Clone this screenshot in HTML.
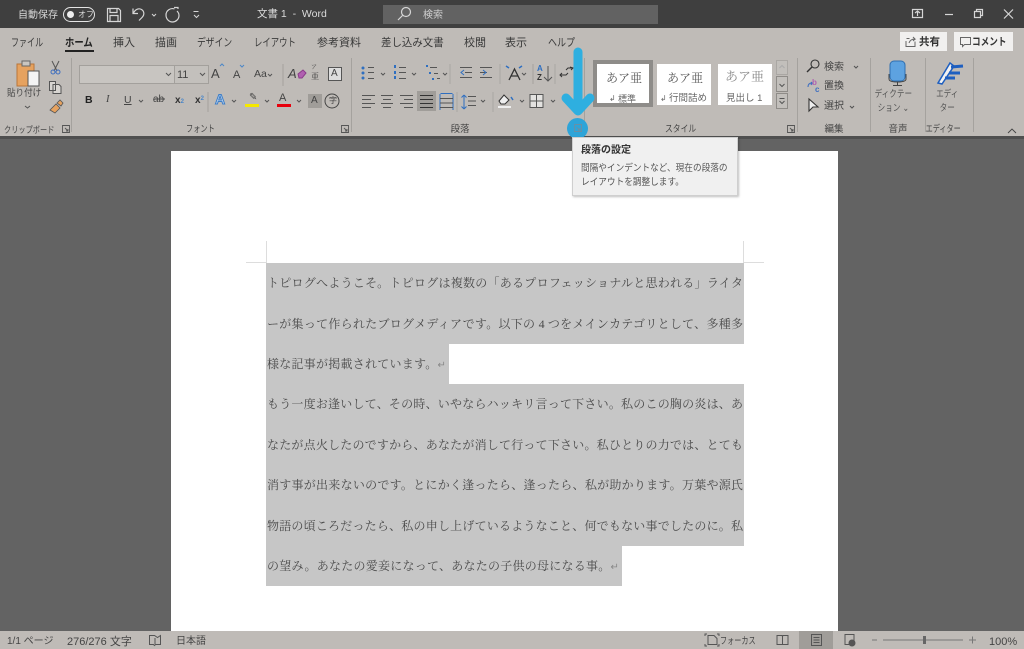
<!DOCTYPE html>
<html lang="ja"><head><meta charset="utf-8"><title>Word</title>
<style>
html,body{margin:0;padding:0;background:#636363}
#r{position:relative;width:1024px;height:649px;overflow:hidden;background:#636363;font-family:"Liberation Sans","Noto Sans CJK JP",sans-serif;color:#3c3c3c}
.a{position:absolute}
.t{position:absolute;white-space:nowrap;font-size:10px;line-height:14px;color:#444;transform-origin:left center}
.c{transform:translateX(-50%);text-align:center}
.d{position:absolute;width:1px;top:58px;height:74px;background:#a5a29e}
.l{position:absolute;left:267px;width:476px;height:20px;line-height:20px;font-family:"Liberation Serif","Noto Serif CJK JP",serif;font-size:12px;color:#4a4a4a;text-align:justify;text-align-last:justify;white-space:nowrap}
.tab{position:absolute;top:36px;font-size:11px;line-height:14px;color:#3a3a3a;white-space:nowrap;transform-origin:left center}
svg{position:absolute;overflow:visible}
.s{font-family:"Liberation Serif","Noto Serif CJK JP",serif}
</style></head><body><div id="r">

<!-- title bar -->
<div class="a" style="left:0;top:0;width:1024px;height:28px;background:#3f3f3f"></div>
<div class="t" style="left:18px;top:9px;color:#d8d8d8">自動保存</div>
<div class="a" style="left:63px;top:7px;width:30px;height:13px;border:1px solid #e4e4e4;border-radius:8px"></div>
<div class="a" style="left:67px;top:11px;width:7px;height:7px;background:#eee;border-radius:50%"></div>
<div class="t" style="left:78px;top:8px;font-size:8px;color:#ddd">オフ</div>
<div class="a" style="left:383px;top:5px;width:275px;height:19px;background:#626262"></div>
<svg style="left:0;top:0" width="1024" height="28" fill="none" stroke="#d6d6d6" stroke-width="1.2">
<path d="M107.500 8.500h11l2 2v11h-13zM110 8.500v4h7v-4M110 21.500v-6h8v6"/>
<path d="M133 8.500v5h5M133.500 13c2-4 5.500-5 8-3.500s3.500 5 .5 8l-3 3"/>
<path d="M152 14l2 2 2-2" stroke-width="1"/>
<path d="M178 9v-1.500h-4M174.500 9c-4-1.500-8.500 1.500-8.500 6s3.500 7 6.500 7 6.500-2.500 6.500-6.500c0-2-1-3.500-2-4.500"/>
<path d="M193.500 11.500h5M194 15l2.500 2.500 2.500-2.500" stroke-width="1"/>
<circle cx="406" cy="12" r="4.500"/><path d="M402.500 15.500l-4.500 4.500"/>
<path d="M912.500 9.500h10v8h-10zM915 13l2.500-2 2.500 2M917.500 11v5"/>
<path d="M945 14.500h8"/>
<path d="M974.500 11.500h6v6h-6zM976.500 11.500v-2h6v6h-2"/>
<path d="M1004 9.500l9 9M1013 9.500l-9 9"/>
</svg>
<div class="t" style="left:257px;top:7px;font-size:10.500px;color:#dcdcdc">文書 1&nbsp; -&nbsp; Word</div>
<div class="t" style="left:423px;top:9px;color:#cfcfcf">検索</div>

<!-- ribbon -->
<div class="a" style="left:0;top:28px;width:1024px;height:108px;background:#bfbbb7"></div>
<div class="a" style="left:0;top:136px;width:1024px;height:3px;background:#4f4f4f"></div>
<div class="tab" style="left:11px;transform:scaleX(.73)">ファイル</div>
<div class="tab" style="left:65px;font-weight:bold;color:#222;transform:scaleX(.85)">ホーム</div>
<div class="a" style="left:65px;top:50px;width:29px;height:2px;background:#222"></div>
<div class="tab" style="left:113px">挿入</div>
<div class="tab" style="left:155px">描画</div>
<div class="tab" style="left:197px;transform:scaleX(.8)">デザイン</div>
<div class="tab" style="left:254px;transform:scaleX(.76)">レイアウト</div>
<div class="tab" style="left:317px">参考資料</div>
<div class="tab" style="left:381px;transform:scaleX(.95)">差し込み文書</div>
<div class="tab" style="left:464px">校閲</div>
<div class="tab" style="left:505px">表示</div>
<div class="tab" style="left:548px;transform:scaleX(.82)">ヘルプ</div>

<div class="a" style="left:900px;top:32px;width:47px;height:19px;background:#f1f0ef"></div>
<div class="t" style="left:919px;top:35px;font-size:10.500px;font-weight:bold;color:#333">共有</div>
<div class="a" style="left:954px;top:32px;width:59px;height:19px;background:#f1f0ef"></div>
<div class="t" style="left:972px;top:35px;font-size:10.500px;font-weight:bold;color:#333;transform:scaleX(.82)">コメント</div>
<svg style="left:0;top:0" width="1024" height="56" fill="none" stroke="#666" stroke-width="1">
<path d="M906.500 38.500h3M906 41v5.500h9v-5M909 43c1-3 3-4 6-4l-2-2M915 39l-2 2"/>
<path d="M960.500 37.500h10v7h-6l-2 2v-2h-2z"/>
</svg>

<div class="d" style="left:71px"></div><div class="d" style="left:351px"></div><div class="d" style="left:584px"></div>
<div class="d" style="left:797px"></div><div class="d" style="left:870px"></div><div class="d" style="left:925px"></div><div class="d" style="left:973px"></div>

<!-- clipboard -->
<svg style="left:0;top:56px" width="72" height="60" fill="none">
<rect x="17" y="8" width="17" height="22" fill="#e6a25f" stroke="#b9763a"/>
<rect x="22" y="5" width="8" height="5" fill="#c9c5c0" stroke="#666"/>
<rect x="28" y="15" width="11" height="15" fill="#f4f4f4" stroke="#555"/>
<path d="M52 5l5 10M59 5l-5 10" stroke="#555"/><circle cx="53" cy="16" r="2" stroke="#3f6fc0"/><circle cx="58" cy="16" r="2" stroke="#3f6fc0"/>
<path d="M49.500 25.500h6v9h-6zM53 28.500h6l2 2v7h-8z" stroke="#555" fill="#d8d5d1"/>
<path d="M50 54l6-6 4 4-5 5zM57 47l3-3 3 3-2 3z" fill="#e6a25f" stroke="#555" stroke-width=".8"/>
<path d="M25 50l2.500 2 2.500-2" stroke="#555"/>
</svg>
<div class="t c" style="left:26px;top:87px;font-size:9.500px;transform:translateX(-50%) scaleX(.9)">貼り付け</div>
<div class="t" style="left:4px;top:123px;font-size:9px;transform:scaleX(.8)">クリップボード</div>

<!-- font boxes -->
<div class="a" style="left:79px;top:65px;width:94px;height:17px;background:#c8c5c1;border:1px solid #a3a09c"></div>
<div class="a" style="left:174px;top:65px;width:33px;height:17px;background:#c3c0bc;border:1px solid #a3a09c"></div>
<div class="t" style="left:177px;top:68px;font-size:11px">11</div>
<div class="t" style="left:211px;top:67px;font-size:13px">A</div>
<div class="t" style="left:233px;top:68px;font-size:11px">A</div>
<div class="t" style="left:254px;top:67px;font-size:10.500px">Aa</div>
<div class="t" style="left:288px;top:67px;font-size:13px;font-style:italic">A</div>
<div class="t s" style="left:311px;top:64px;font-size:6px;line-height:8px">ア</div>
<div class="t s" style="left:311px;top:72px;font-size:8px;line-height:10px">亜</div>
<div class="a" style="left:328px;top:67px;width:12px;height:12px;border:1px solid #555;background:#ddd"></div>
<div class="t" style="left:331px;top:67px;font-size:10px">A</div>
<svg style="left:0;top:56px" width="350" height="60" fill="none" stroke="#555" stroke-width="1">
<path d="M166 17l2.500 2.500 2.500-2.500M200 17l2.500 2.500 2.500-2.500M268 18l2 2 2-2M139 44l2 2 2-2M232 44l2 2 2-2M265 44l2 2 2-2M297 44l2 2 2-2"/>
<path d="M220 10l2-2 2 2M240 9l2 2 2-2" stroke="#4a86c8"/>
<path d="M283 8v22" stroke="#a5a29e"/><path d="M298 18l5-4 3 3-4 5h-3z" fill="#b060b0" stroke="#8a3a8a"/>
<path d="M208 36v20" stroke="#a5a29e"/>
<path d="M153 43h12" stroke="#444"/><path d="M332 45m-7 0a7 7 0 1 0 14 0a7 7 0 1 0 -14 0" stroke="#444"/>
</svg>
<div class="t" style="left:85px;top:93px;font-size:10.500px;font-weight:bold;color:#222">B</div>
<div class="t" style="left:106px;top:93px;font-size:10.500px;font-style:italic;font-family:'Liberation Serif',serif">I</div>
<div class="t" style="left:124px;top:93px;font-size:10.500px;text-decoration:underline">U</div>
<div class="t" style="left:153px;top:93px;font-size:10px">ab</div>
<div class="t" style="left:175px;top:94px;font-size:10px;font-weight:bold;color:#333">x<span style="font-size:6px;color:#4a86c8">2</span></div>
<div class="t" style="left:195px;top:92px;font-size:10px;font-weight:bold;color:#333">x<span style="font-size:6px;color:#4a86c8;vertical-align:3px">2</span></div>
<div class="t" style="left:215px;top:92px;font-size:14px;font-weight:bold;color:#bcd3ec;-webkit-text-stroke:1px #3f7fc8">A</div>
<div class="t" style="left:249px;top:91px;font-size:10px">✎</div>
<div class="a" style="left:245px;top:104px;width:14px;height:3px;background:#f5e800"></div>
<div class="t" style="left:279px;top:91px;font-size:11px">A</div>
<div class="a" style="left:277px;top:104px;width:14px;height:3px;background:#e8000c"></div>
<div class="a" style="left:308px;top:94px;width:14px;height:14px;background:#a09d99"></div>
<div class="t" style="left:311px;top:94px;font-size:10px">A</div>
<div class="t" style="left:329px;top:94px;font-size:8px">字</div>
<div class="t c" style="left:205px;top:123px;font-size:9.500px;transform:translateX(-50%) scaleX(.76)">フォント</div>

<!-- launchers -->
<svg style="left:0;top:120px" width="1024" height="16" fill="none" stroke="#555" stroke-width=".9">
<path d="M62.500 5.500h7v7h-7zM65 8l3 3M68 9v2h-2"/>
<path d="M341.500 5.500h7v7h-7zM344 8l3 3M347 9v2h-2"/>
<path d="M787.500 5.500h7v7h-7zM790 8l3 3M793 9v2h-2"/>
<path d="M1008 13l4-4 4 4" stroke="#444"/>
</svg>

<!-- paragraph -->
<svg style="left:350px;top:56px" width="240" height="60" fill="none" stroke="#555" stroke-width="1">
<g fill="#2f6fc0" stroke="none"><circle cx="13" cy="12" r="1.500"/><circle cx="13" cy="17" r="1.500"/><circle cx="13" cy="22" r="1.500"/><rect x="44" y="9" width="2" height="3"/><rect x="44" y="15" width="2" height="3"/><rect x="44" y="20" width="2" height="3"/><rect x="76" y="9" width="2" height="2"/><rect x="79" y="16" width="2" height="2"/><rect x="82" y="22" width="2" height="2"/></g>
<path d="M18 11.500h6M18 16.500h6M18 22.500h6M49 11.500h7M49 16.500h7M49 22.500h7M80 11.500h7M84 17.500h4M87 22.500h3"/>
<path d="M31 17l2 2 2-2M62 17l2 2 2-2M93 17l2 2 2-2M172 17l2 2 2-2"/>
<path d="M110 11.500h12M115 16.500h7M110 21.500h12M130 11.500h12M130 16.500h7M130 21.500h12"/>
<path d="M114 14l-3 2.500 3 2.500M133 14l3 2.500-3 2.500" stroke="#2f6fc0"/>
<path d="M159 24l5.500-11 5.500 11M161 20h7" stroke="#333" stroke-width="1.300"/>
<path d="M156 10l3 2M172 10l-3 2" stroke="#2f6fc0" stroke-width="1.500"/>
<path d="M183 8v20" stroke="#a5a29e"/><path d="M107 36v20M143 36v20M100 8v20M150 8v20M205 8v20" stroke="#a5a29e" opacity=".8"/>
<path d="M198 10v15M194 21l4 4 4-4"/>
<path d="M210 19h6l2-2M223 12h-5l-2 2M212 17l-2 2 2 2M220 11l3 1-2 2" stroke="#333"/>
<path d="M12 39.500h13M12 43.500h9M12 47.500h13M12 51.500h9M31 39.500h12M33 43.500h8M31 47.500h12M33 51.500h8M50 39.500h13M54 43.500h9M50 47.500h13M54 51.500h9"/>
<rect x="67" y="35" width="19" height="20" fill="#a09d99" stroke="none"/>
<path d="M70 39.500h13M70 43.500h13M70 47.500h13M70 51.500h13" stroke="#333"/>
<path d="M90 38v16M103 38v16M90.500 37.500h12" stroke="#2f6fc0"/><path d="M90 42.500h13M90 47h13M90 51.500h13" stroke="#555"/>
<path d="M114 39l-2.500 2.500M114 39l2.500 2.500M114 39v14M114 53l-2.500-2.500M114 53l2.500-2.500" stroke="#2f6fc0"/>
<path d="M118 40.500h8M118 45h8M118 49.500h8"/>
<path d="M131 44l2 2 2-2M170 44l2 2 2-2M201 44l2 2 2-2"/>
<path d="M149 45l5-6 5 5-4 4h-4z" fill="#eee" stroke="#333"/><path d="M161 41l2 3" stroke="#2f6fc0" stroke-width="1.500"/>
<rect x="148" y="50" width="13" height="2" fill="#eee" stroke="none"/>
<rect x="180" y="38.500" width="13" height="13" fill="#e3e2e0"/><path d="M186.500 38v13M180 45h13"/>
</svg>
<div class="t" style="left:537px;top:64px;font-size:8px;line-height:9px;font-weight:bold;color:#2f6fc0">A</div>
<div class="t" style="left:537px;top:73px;font-size:8px;line-height:9px;font-weight:bold;color:#333">Z</div>
<div class="t c" style="left:460px;top:123px;font-size:9.500px">段落</div>

<!-- styles -->
<div class="a" style="left:593px;top:60px;width:52px;height:39px;background:#fff;border:4px solid #8e8c89"></div>
<div class="a" style="left:657px;top:64px;width:54px;height:41px;background:#fff"></div>
<div class="a" style="left:718px;top:64px;width:54px;height:41px;background:#fff"></div>
<div class="a" style="left:776px;top:60px;width:12px;height:15px;background:#c2bfbb;border:1px solid #aaa7a3;box-sizing:border-box"></div>
<div class="a" style="left:776px;top:76px;width:12px;height:16px;background:#c2bfbb;border:1px solid #8f8c88;box-sizing:border-box"></div>
<div class="a" style="left:776px;top:93px;width:12px;height:16px;background:#c2bfbb;border:1px solid #8f8c88;box-sizing:border-box"></div>
<svg style="left:776px;top:60px" width="12" height="50" fill="none" stroke="#555"><path d="M3.500 8l2.500-2.500 2.500 2.500" stroke="#aaa"/><path d="M3.500 24l2.500 2.500 2.500-2.500M3.500 38.500h5M3.500 41l2.500 2.500 2.500-2.500"/></svg>
<div class="t s" style="left:606px;top:71px;font-size:12px;color:#555">あア亜</div>
<div class="t" style="left:618px;top:92px;font-size:9px;color:#666">標準</div>
<div class="t" style="left:609px;top:92px;font-size:8px;color:#666">↲</div>
<div class="t s" style="left:667px;top:71px;font-size:12px;color:#555">あア亜</div>
<div class="t" style="left:669px;top:92px;font-size:9.500px;color:#666">行間詰め</div>
<div class="t" style="left:660px;top:92px;font-size:8px;color:#666">↲</div>
<div class="t s" style="left:725px;top:70px;font-size:13px;color:#8a8a8a">あア亜</div>
<div class="t" style="left:726px;top:92px;font-size:9.500px;color:#666">見出し 1</div>
<div class="t c" style="left:684px;top:123px;font-size:9.500px;transform:translateX(-50%) scaleX(.82)">スタイル</div>

<!-- editing -->
<svg style="left:800px;top:56px" width="70" height="60" fill="none" stroke="#333" stroke-width="1.100">
<circle cx="15" cy="8" r="4"/><path d="M12 11l-5 5" stroke-width="1.400"/>
<path d="M9 55l0-12 9 8h-5z" fill="#eee"/>
<path d="M54 10l2 2 2-2M50 50l2 2 2-2" stroke="#555"/>
<path d="M8 31c0-3 2-4 4-4l-1-1M12 27l-1 2" stroke="#3f6fc0"/>
</svg>
<div class="t" style="left:812px;top:79px;font-size:8px;line-height:8px;font-weight:bold;color:#b060b0">b</div>
<div class="t" style="left:815px;top:86px;font-size:8px;line-height:8px;font-weight:bold;color:#3f6fc0">c</div>
<div class="t" style="left:824px;top:61px;font-size:10px">検索</div>
<div class="t" style="left:824px;top:80px;font-size:10px">置換</div>
<div class="t" style="left:824px;top:100px;font-size:10px">選択</div>
<div class="t c" style="left:834px;top:123px;font-size:9.500px">編集</div>

<!-- dictation -->
<svg style="left:885px;top:58px" width="30" height="30" fill="none">
<rect x="5" y="3" width="15" height="20" rx="4" fill="#5da2e0" stroke="#2f6fb0"/>
<path d="M4 16v5c0 2 3 3 8.500 3s8.500-1 8.500-3v-5M12.500 24v3M8 27.500h9" stroke="#444"/>
</svg>
<div class="t c" style="left:898px;top:88px;font-size:9.500px;line-height:14px;color:#555;transform:translateX(-50%) scaleX(.8)">ディクテー<br>ション ⌄</div>
<div class="t c" style="left:898px;top:123px;font-size:9.500px">音声</div>

<!-- editor -->
<svg style="left:935px;top:58px" width="30" height="30" fill="none">
<path d="M3 25L15 5l4 3L7 26z" fill="#f2f2f2" stroke="#1e5fc0" stroke-width="1.500"/>
<path d="M16 9l12-1M14 15h11M10 20h10" stroke="#1e5fc0" stroke-width="3"/>
</svg>
<div class="t c" style="left:950px;top:88px;font-size:9.500px;line-height:14px;color:#555;transform:translateX(-50%) scaleX(.8)">エディ<br>ター</div>
<div class="t c" style="left:949px;top:123px;font-size:9.500px;transform:translateX(-50%) scaleX(.75)">エディター</div>

<!-- page -->
<div class="a" style="left:171px;top:151px;width:667px;height:480px;background:#fff"></div>
<div class="a" style="left:266px;top:241px;width:1px;height:22px;background:#ddd"></div>
<div class="a" style="left:743px;top:241px;width:1px;height:22px;background:#ddd"></div>
<div class="a" style="left:246px;top:262px;width:20px;height:1px;background:#ddd"></div>
<div class="a" style="left:744px;top:262px;width:20px;height:1px;background:#ddd"></div>
<div class="a" style="left:266px;top:263px;width:478px;height:81px;background:#c6c6c6"></div>
<div class="a" style="left:266px;top:344px;width:183px;height:40px;background:#c6c6c6"></div>
<div class="a" style="left:266px;top:384px;width:478px;height:162px;background:#c6c6c6"></div>
<div class="a" style="left:266px;top:546px;width:356px;height:40px;background:#c6c6c6"></div>

<div class="l" style="top:273px">トピログへようこそ。トピログは複数の「あるプロフェッショナルと思われる」ライタ</div>
<div class="l" style="top:314px">ーが集って作られたブログメディアです。以下の 4 つをメインカテゴリとして、多種多</div>
<div class="l" style="top:354px;width:auto;text-align-last:auto;letter-spacing:.25px">様な記事が掲載されています。<span style="color:#888;font-size:10px">↵</span></div>
<div class="l" style="top:394px">もう一度お逢いして、その時、いやならハッキリ言って下さい。私のこの胸の炎は、あ</div>
<div class="l" style="top:435px">なたが点火したのですから、あなたが消して行って下さい。私ひとりの力では、とても</div>
<div class="l" style="top:475px">消す事が出来ないのです。とにかく逢ったら、逢ったら、私が助かります。万葉や源氏</div>
<div class="l" style="top:516px">物語の頃ころだったら、私の申し上げているようなこと、何でもない事でしたのに。私</div>
<div class="l" style="top:556px;width:auto;text-align-last:auto;letter-spacing:.25px">の望み。あなたの愛妾になって、あなたの子供の母になる事。<span style="color:#888;font-size:10px">↵</span></div>

<!-- status bar -->
<div class="a" style="left:0;top:631px;width:1024px;height:18px;background:#bfbbb7"></div>
<div class="a" style="left:799px;top:631px;width:34px;height:18px;background:#a09d99"></div>
<div class="t" style="left:7px;top:635px;font-size:10px">1/1 ページ</div>
<div class="t" style="left:67px;top:635px;font-size:11px">276/276 文字</div>
<div class="t" style="left:176px;top:635px;font-size:10px">日本語</div>
<div class="t" style="left:720px;top:635px;font-size:9.500px;transform:scaleX(.75)">フォーカス</div>
<div class="t" style="left:989px;top:635px;font-size:11px">100%</div>
<svg style="left:0;top:631px" width="1024" height="18" fill="none" stroke="#555" stroke-width="1">
<path d="M149.500 4.500h5l3 2 3-2h0v9h-5l-1 1-1-1h-4zM155 7v6"/>
<path d="M708 4.500h6l3 3v6h-9zM705 5v-2h2M719 5v-2h-2M705 13v2h2M719 13v2h-2"/>
<path d="M777 4.500h5l.5 1 .5-1h5v9h-11zM782.500 5v8"/>
<path d="M811.500 3.500h10v11h-10zM813.500 6.500h6M813.500 9h6M813.500 11.500h6"/>
<path d="M845 3.500h9v10h-9z"/><circle cx="852" cy="12" r="3" fill="#555"/>
<path d="M872 9h5M883 9h80M969 9h7M972.500 5.500v7" stroke="#777"/>
<rect x="923" y="5" width="3" height="8" fill="#666" stroke="none"/>
</svg>

<!-- arrow -->
<svg style="left:555px;top:45px" width="50" height="100" fill="none" stroke="#2eafe0" stroke-width="9" stroke-linecap="round" stroke-linejoin="round">
<path d="M23 7v59M11 53l12 13 12-13"/>
<circle cx="22.500" cy="83.500" r="10.500" fill="#2ea4d8" stroke="none"/>
<path d="M19.500 79.500h7v7h-7zM21.500 82l3 3M25 83v2h-2" stroke="#6a8fa5" stroke-width=".9" stroke-linecap="butt"/>
</svg>

<!-- tooltip -->
<div class="a" style="left:572px;top:137px;width:164px;height:57px;background:#f0f0f0;border:1px solid #cfcfcf;box-shadow:1px 1px 2px rgba(0,0,0,.25)"></div>
<div class="t" style="left:581px;top:144px;font-size:10px;font-weight:bold;color:#333">段落の設定</div>
<div class="t" style="left:581px;top:162px;font-size:9.500px;color:#555;transform:scaleX(.91)">間隔やインデントなど、現在の段落の</div>
<div class="t" style="left:581px;top:176px;font-size:9.500px;color:#555;transform:scaleX(.91)">レイアウトを調整します。</div>

</div></body></html>
